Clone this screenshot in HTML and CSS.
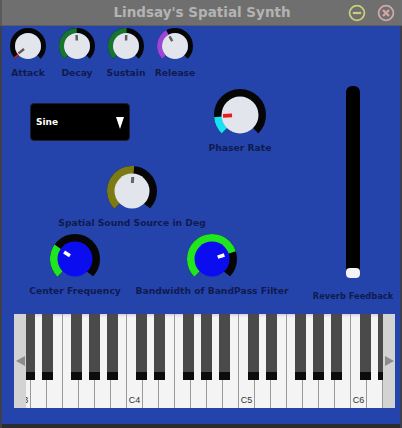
FILE: index.html
```html
<!DOCTYPE html>
<html lang="en">
<head>
<meta charset="utf-8">
<title>Lindsay's Spatial Synth</title>
<link rel="stylesheet" href="styles.css">
</head>
<body>
<div class="window">
  <header class="titlebar">
    <div class="tb-spacer"></div>
    <h1 class="title">Lindsay's Spatial Synth</h1>
    <div class="win-buttons">
      <svg class="win-btn" width="18" height="18" viewBox="0 0 18 18"><circle cx="9" cy="9" r="7.4" fill="none" stroke="#c9cd7c" stroke-width="1.8"/><line x1="4.8" y1="9" x2="13.2" y2="9" stroke="#c9cd7c" stroke-width="2.2"/></svg>
      <svg class="win-btn" width="18" height="18" viewBox="0 0 18 18"><circle cx="9" cy="9" r="7.4" fill="none" stroke="#d3a7a7" stroke-width="1.8"/><path d="M6 6 L12 12 M12 6 L6 12" stroke="#d3a7a7" stroke-width="2.2" fill="none"/></svg>
    </div>
  </header>

  <main class="panel">
    <div class="upper">
      <div class="controls">
        <div class="row row1">
          <div class="knob small">
            <svg width="38" height="38" viewBox="0 0 38 38">
              <circle cx="19" cy="19" r="15.5" fill="none" stroke="#060606" stroke-width="5" pathLength="360" stroke-dasharray="270 90" transform="rotate(135 19 19)"/>
              <circle cx="19" cy="19" r="15.5" fill="none" stroke="#c42222" stroke-width="5" pathLength="360" stroke-dasharray="7 360" transform="rotate(135 19 19)"/>
              <circle cx="19" cy="19" r="13" fill="#e3e5ed"/>
              <line x1="19" y1="14" x2="19" y2="7" stroke="#6b5550" stroke-width="2.5" transform="rotate(-128 19 19)"/>
            </svg>
            <span class="label">Attack</span>
          </div>
          <div class="knob small">
            <svg width="38" height="38" viewBox="0 0 38 38">
              <circle cx="19" cy="19" r="15.5" fill="none" stroke="#060606" stroke-width="5" pathLength="360" stroke-dasharray="270 90" transform="rotate(135 19 19)"/>
              <circle cx="19" cy="19" r="15.5" fill="none" stroke="#16772c" stroke-width="5" pathLength="360" stroke-dasharray="134 360" transform="rotate(135 19 19)"/>
              <circle cx="19" cy="19" r="13" fill="#e3e5ed"/>
              <line x1="19" y1="13.5" x2="19" y2="8" stroke="#5e5e5e" stroke-width="2.5" transform="rotate(-2 19 19)"/>
            </svg>
            <span class="label">Decay</span>
          </div>
          <div class="knob small">
            <svg width="38" height="38" viewBox="0 0 38 38">
              <circle cx="19" cy="19" r="15.5" fill="none" stroke="#060606" stroke-width="5" pathLength="360" stroke-dasharray="270 90" transform="rotate(135 19 19)"/>
              <circle cx="19" cy="19" r="15.5" fill="none" stroke="#16772c" stroke-width="5" pathLength="360" stroke-dasharray="137 360" transform="rotate(135 19 19)"/>
              <circle cx="19" cy="19" r="13" fill="#e3e5ed"/>
              <line x1="19" y1="13.5" x2="19" y2="8" stroke="#5e5e5e" stroke-width="2.5" transform="rotate(1 19 19)"/>
            </svg>
            <span class="label">Sustain</span>
          </div>
          <div class="knob small">
            <svg width="38" height="38" viewBox="0 0 38 38">
              <circle cx="19" cy="19" r="15.5" fill="none" stroke="#060606" stroke-width="5" pathLength="360" stroke-dasharray="270 90" transform="rotate(135 19 19)"/>
              <circle cx="19" cy="19" r="15.5" fill="none" stroke="#9b46d8" stroke-width="5" pathLength="360" stroke-dasharray="106 360" transform="rotate(135 19 19)"/>
              <circle cx="19" cy="19" r="13" fill="#e3e5ed"/>
              <line x1="19" y1="13.5" x2="19" y2="8" stroke="#5e5e5e" stroke-width="2.5" transform="rotate(-30 19 19)"/>
            </svg>
            <span class="label">Release</span>
          </div>
        </div>

        <div class="row row2">
          <div class="dropdown">
            <span class="dd-text">Sine</span>
            <svg class="dd-arrow" width="8" height="12" viewBox="0 0 8 12"><polygon points="0,0 8,0 4,12" fill="#ffffff"/></svg>
          </div>
          <div class="knob phaser">
            <svg width="54" height="54" viewBox="0 0 54 54">
              <circle cx="27" cy="27" r="22" fill="none" stroke="#060606" stroke-width="8" pathLength="360" stroke-dasharray="270 90" transform="rotate(135 27 27)"/>
              <circle cx="27" cy="27" r="22" fill="none" stroke="#19e0f2" stroke-width="8" pathLength="360" stroke-dasharray="40 360" transform="rotate(135 27 27)"/>
              <circle cx="27" cy="27" r="18.5" fill="#e3e5ed"/>
              <line x1="27" y1="19" x2="27" y2="10" stroke="#ee1a1a" stroke-width="3.6" transform="rotate(-93 27 27)"/>
            </svg>
            <span class="label">Phaser Rate</span>
          </div>
        </div>

        <div class="row row3">
          <div class="knob spatial">
            <svg width="52" height="52" viewBox="0 0 52 52">
              <circle cx="26" cy="26" r="21" fill="none" stroke="#060606" stroke-width="8" pathLength="360" stroke-dasharray="270 90" transform="rotate(135 26 26)"/>
              <circle cx="26" cy="26" r="21" fill="none" stroke="#7c7a12" stroke-width="8" pathLength="360" stroke-dasharray="140 360" transform="rotate(135 26 26)"/>
              <circle cx="26" cy="26" r="17.5" fill="#e3e5ed"/>
              <line x1="26" y1="18" x2="26" y2="12" stroke="#646464" stroke-width="3" transform="rotate(3 26 26)"/>
            </svg>
            <span class="label">Spatial Sound Source in Deg</span>
          </div>
        </div>

        <div class="row row4">
          <div class="knob cf">
            <svg width="52" height="52" viewBox="0 0 52 52">
              <circle cx="26" cy="26" r="21" fill="none" stroke="#060606" stroke-width="8" pathLength="360" stroke-dasharray="270 90" transform="rotate(135 26 26)"/>
              <circle cx="26" cy="26" r="21" fill="none" stroke="#20e620" stroke-width="8" pathLength="360" stroke-dasharray="80 360" transform="rotate(135 26 26)"/>
              <circle cx="26" cy="26" r="17.5" fill="#0c0cf0"/>
              <line x1="26" y1="20" x2="26" y2="13" stroke="#ffffff" stroke-width="3.5" transform="rotate(-57 26 26)"/>
            </svg>
            <span class="label">Center Frequency</span>
          </div>
          <div class="knob bw">
            <svg width="52" height="52" viewBox="0 0 52 52">
              <circle cx="26" cy="26" r="21" fill="none" stroke="#060606" stroke-width="8" pathLength="360" stroke-dasharray="270 90" transform="rotate(135 26 26)"/>
              <circle cx="26" cy="26" r="21" fill="none" stroke="#20e620" stroke-width="8" pathLength="360" stroke-dasharray="207 360" transform="rotate(135 26 26)"/>
              <circle cx="26" cy="26" r="17.5" fill="#0c0cf0"/>
              <line x1="26" y1="20" x2="26" y2="13" stroke="#ffffff" stroke-width="3.5" transform="rotate(72 26 26)"/>
            </svg>
            <span class="label">Bandwidth of BandPass Filter</span>
          </div>
        </div>
      </div>

      <div class="reverb">
        <div class="slider"><div class="thumb"></div></div>
        <span class="label reverb-label">Reverb Feedback</span>
      </div>
    </div>

    <div class="keyboard">
      <div class="keys">
        <div class="octave">
          <div class="wk"><span class="note">C3</span></div><div class="wk"></div><div class="wk"></div><div class="wk"></div><div class="wk"></div><div class="wk"></div><div class="wk"></div>
          <div class="bk cs"></div><div class="bk ds"></div><div class="bk fs"></div><div class="bk gs"></div><div class="bk as"></div>
        </div>
        <div class="octave">
          <div class="wk"><span class="note">C4</span></div><div class="wk"></div><div class="wk"></div><div class="wk"></div><div class="wk"></div><div class="wk"></div><div class="wk"></div>
          <div class="bk cs"></div><div class="bk ds"></div><div class="bk fs"></div><div class="bk gs"></div><div class="bk as"></div>
        </div>
        <div class="octave">
          <div class="wk"><span class="note">C5</span></div><div class="wk"></div><div class="wk"></div><div class="wk"></div><div class="wk"></div><div class="wk"></div><div class="wk"></div>
          <div class="bk cs"></div><div class="bk ds"></div><div class="bk fs"></div><div class="bk gs"></div><div class="bk as"></div>
        </div>
        <div class="octave">
          <div class="wk"><span class="note">C6</span></div><div class="wk"></div><div class="wk"></div>
          <div class="bk cs"></div><div class="bk ds"></div>
        </div>
      </div>
      <div class="scroll scroll-left">
        <svg width="9" height="10" viewBox="0 0 9 10"><polygon points="9,0 9,10 0,5" fill="#8c8c8c"/></svg>
      </div>
      <div class="scroll scroll-right">
        <svg width="9" height="10" viewBox="0 0 9 10"><polygon points="0,0 0,10 9,5" fill="#8c8c8c"/></svg>
      </div>
    </div>

    <div class="footer"></div>
  </main>
</div>
</body>
</html>
```

FILE: styles.css
```css
* { box-sizing: border-box; }

html, body {
  margin: 0;
  padding: 0;
}

body {
  width: 402px;
  height: 428px;
  overflow: hidden;
  background: #2544ab;
  font-family: "DejaVu Sans", Verdana, sans-serif;
}

.window {
  width: 402px;
  height: 428px;
  display: flex;
  flex-direction: column;
}

/* ---------- title bar ---------- */
.titlebar {
  height: 26px;
  flex: none;
  display: grid;
  grid-template-columns: 1fr auto 1fr;
  align-items: center;
  background: #6f6f6f;
  border-bottom: 1px solid #5d5d5d;
  border-left: 2px solid #5a5a5a;
}

.title {
  margin: 0;
  font-family: "DejaVu Sans", Verdana, sans-serif;
  font-weight: bold;
  font-size: 13.5px;
  line-height: 25px;
  color: #b3b3b3;
  white-space: nowrap;
}

.win-buttons {
  justify-self: end;
  display: flex;
  gap: 11px;
  padding-right: 7px;
  padding-top: 1px;
}

.win-btn { display: block; }

/* ---------- main panel ---------- */
.panel {
  flex: 1;
  display: flex;
  flex-direction: column;
  background: #2544ab;
  border-left: 2px solid #3b3f4e;
  border-right: 2px solid #3b3f4e;
}

.upper {
  height: 288px;
  flex: none;
  display: flex;
}

.controls {
  width: 310px;
  flex: none;
  padding-top: 1px;
  display: flex;
  flex-direction: column;
}

.row {
  display: flex;
  align-items: flex-start;
  flex: none;
}

.row1 { height: 61px; padding-left: 2px; gap: 1px; }
.row2 { height: 77px; }
.row3 { height: 67px; }
.row4 { padding-top: 1px; }

.knob {
  display: flex;
  flex-direction: column;
  align-items: center;
  flex: none;
}

.knob svg { display: block; }

.label {
  display: block;
  font-family: "DejaVu Sans", Verdana, sans-serif;
  font-weight: bold;
  font-size: 9.2px;
  line-height: 11px;
  color: #0f1b50;
  white-space: nowrap;
}

.knob.small { width: 48px; }
.knob.small .label { margin-top: 2px; }

.dropdown {
  width: 100px;
  height: 38px;
  margin-left: 28px;
  margin-top: 15px;
  background: #000000;
  border: 1px solid #1a1f33;
  border-radius: 4px;
  display: flex;
  align-items: center;
  justify-content: space-between;
  padding: 0 5px 0 5px;
  flex: none;
}

.dd-text {
  font-family: "DejaVu Sans", Verdana, sans-serif;
  font-weight: bold;
  font-size: 9px;
  color: #ffffff;
}

.dd-arrow { display: block; margin-top: 1px; }

.knob.phaser { width: 80px; margin-left: 70px; }

.knob.spatial { width: 160px; margin-left: 50px; }

.knob.cf { width: 100px; margin-left: 23px; }
.knob.bw { width: 170px; margin-left: 2px; }

/* ---------- reverb slider ---------- */
.reverb {
  width: 82px;
  flex: none;
  display: flex;
  flex-direction: column;
  align-items: center;
}

.slider {
  width: 14px;
  height: 192px;
  margin-top: 60px;
  background: #000000;
  border-radius: 6px 6px 4px 4px;
  display: flex;
  flex-direction: column;
  justify-content: flex-end;
}

.thumb {
  height: 10px;
  background: #f4f4f8;
  border-radius: 4px;
}

.reverb .label { margin-top: 13px; }
.reverb-label { font-size: 8.3px; }

/* ---------- keyboard ---------- */
.keyboard {
  position: relative;
  width: 381px;
  height: 94px;
  margin-left: 12px;
  overflow: hidden;
  flex: none;
  background: #f4f4f4;
}

.keys {
  display: flex;
  padding-left: 1px;
  height: 100%;
}

.octave {
  position: relative;
  display: flex;
  flex: none;
  height: 100%;
}

.wk {
  width: 16px;
  height: 94px;
  flex: none;
  border-right: 1px solid #9a9a9a;
  background: linear-gradient(#d5cde6 0, #e9e6f0 2px, #f4f4f4 4px);
  display: flex;
  align-items: flex-end;
  justify-content: center;
  padding-bottom: 3px;
}

.note {
  font-family: "Liberation Sans", Arial, sans-serif;
  font-size: 9px;
  line-height: 9px;
  color: #333333;
}

.bk {
  position: absolute;
  top: 0;
  width: 11px;
  height: 66px;
  background: #4a4a4a;
  border-bottom: 8px solid #0c0c0c;
}

.bk.cs { left: 8.5px; }
.bk.ds { left: 27px; }
.bk.fs { left: 55.5px; }
.bk.gs { left: 73.5px; }
.bk.as { left: 92.3px; }

.scroll {
  position: absolute;
  top: 0;
  bottom: 0;
  width: 12px;
  background: #d3d3d3;
  display: flex;
  align-items: center;
  justify-content: center;
}

.scroll svg { display: block; }
.scroll-left { left: 0; }
.scroll-right { right: 0; }

.footer {
  flex: 1;
  border-bottom: 4px solid #2c2c2c;
}
```
